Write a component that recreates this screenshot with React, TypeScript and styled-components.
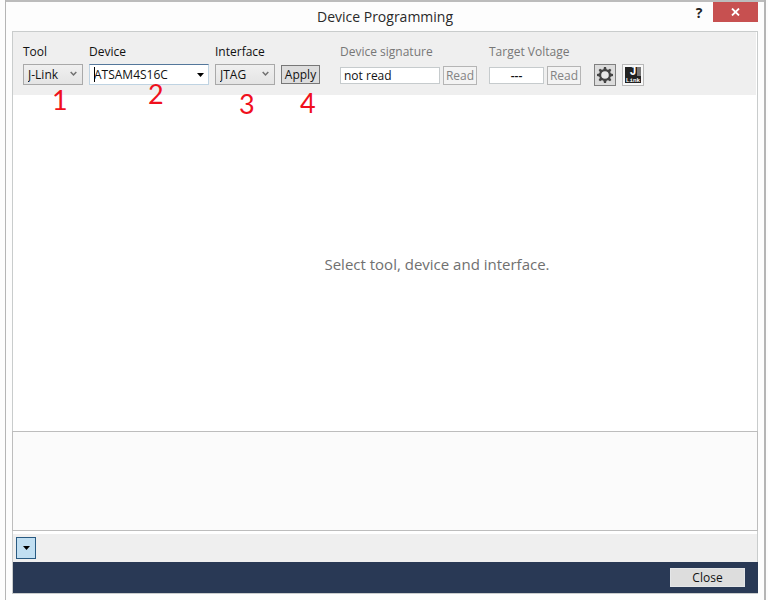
import React from "react";
import styled, { createGlobalStyle, css } from "styled-components";

const GlobalStyle = createGlobalStyle`
  * { box-sizing: border-box; }
  html, body { margin: 0; background: #fdfdfd; overflow: hidden; }
  body, button, input, select { font-family: "Open Sans", "Noto Sans", sans-serif; font-size: 12px; }
`;

const Window = styled.div`
  display: flex;
  flex-direction: column;
  height: 100vh;
  margin: 0 2px 0 5px;
  padding: 0 6px 6px;
  border: solid #b5b5b5;
  border-width: 0 2px 0 1px;
  background: #fdfdfd;
`;

const TitleBar = styled.header`
  display: grid;
  grid-template-columns: 1fr auto 1fr;
  height: 31px;
  flex: none;
  margin: 0 -6px;
  padding: 0 6px;
  border-top: 2px solid #bcbcbc;
`;

const Title = styled.h1`
  grid-column: 2;
  margin: 0;
  padding-top: 2px;
  font-size: 14px;
  line-height: 25px;
  font-weight: 400;
  color: #2a2a2a;
`;

const Caption = styled.div`
  display: flex;
  justify-content: flex-end;
  align-items: flex-start;
`;

const CaptionButton = styled.button<{ $danger?: boolean }>`
  display: flex;
  align-items: center;
  justify-content: center;
  width: ${(p) => (p.$danger ? 45 : 28)}px;
  height: 20px;
  padding: 0;
  border: 0;
  background: ${(p) => (p.$danger ? "#c75050" : "transparent")};
  color: ${(p) => (p.$danger ? "#fff" : "#222")};
  font-size: 14px;
  font-weight: 700;
`;

const Panel = styled.main`
  display: flex;
  flex-direction: column;
  flex: 1;
  min-height: 0;
  border: 1px solid #c9cccc;
  background: #fff;
`;

const Toolbar = styled.div`
  display: flex;
  align-items: flex-start;
  flex: none;
  height: 63px;
  padding: 10px;
  background: #efefef;
  margin-right: 1px;
`;

const Group = styled.div<{ $gap?: number }>`
  display: flex;
  align-items: flex-end;
  gap: 6px;
  margin-right: ${(p) => p.$gap ?? 0}px;
`;

const Field = styled.div<{ $muted?: boolean }>`
  position: relative;
  display: flex;
  flex-direction: column;
  color: ${(p) => (p.$muted ? "#777" : "#111")};
  label { line-height: 20px; margin-bottom: ${(p) => (p.$muted ? 2 : 1)}px; white-space: nowrap; }
`;

const IconGroup = styled.div`
  display: flex;
  gap: 6px;
  padding-top: 22px;
`;

const Controls = styled.div`
  display: flex;
  align-items: center;
  height: 23px;
  gap: 3px;
`;

const Box = styled.div<{ $width: number }>`
  position: relative;
  width: ${(p) => p.$width}px;
  height: 21px;
`;

const Select = styled.select`
  appearance: none;
  display: block;
  width: 100%;
  height: 21px;
  padding: 0 0 0 4px;
  border: 1px solid #a9a9a9;
  border-radius: 0;
  background: linear-gradient(#f0f0f0, #e4e4e4);
  color: #111;
`;

const Chevron = styled.svg`
  position: absolute;
  right: 6px;
  top: 7px;
  pointer-events: none;
`;

const Combo = styled.div`
  display: flex;
  height: 21px;
  width: 100%;
  border: 1px solid #bfd3e2;
  border-top-color: #54779b;
  background: #fff;
`;

const ComboInput = styled.input`
  flex: 1;
  min-width: 0;
  padding: 0 0 0 4px;
  border: 0;
  background: transparent;
  color: #111;
  outline: none;
`;

const ComboButton = styled.button`
  display: flex;
  align-items: center;
  justify-content: center;
  width: 15px;
  padding: 0;
  border: 0;
  background: transparent;
`;

const Caret = styled.span`
  position: absolute;
  left: 5px;
  top: 3px;
  width: 1px;
  height: 15px;
  background: #000;
`;

const TextBox = styled.input<{ $width: number; $center?: boolean }>`
  width: ${(p) => p.$width}px;
  height: 17px;
  padding: 0 3px;
  border: 1px solid #c6cbcd;
  background: #fff;
  color: #111;
  ${(p) => p.$center && css`
    text-align: center;
    font-weight: 600;
  `}
`;

const Button = styled.button<{ $kind: "apply" | "read" | "close" }>`
  padding: 0;
  border: 1px solid #b5b5b5;
  border-radius: 0;
  line-height: 16px;
  height: 19px;
  width: 34px;
  color: #838383;
  background: #f3f3f3;
  ${(p) => p.$kind === "apply" && css`
    width: 39px;
    border-color: #777;
    background: #ddd;
    color: #111;
  `}
  ${(p) => p.$kind === "close" && css`
    width: 75px;
    border-color: #e4e6e8;
    background: #ddd;
    color: #111;
  `}
`;

const IconButton = styled.button<{ $active?: boolean }>`
  display: flex;
  align-items: center;
  justify-content: center;
  width: 22px;
  height: 22px;
  padding: 0;
  border: 1px solid ${(p) => (p.$active ? "#808080" : "#b9b9b9")};
  background: ${(p) => (p.$active ? "#dcdcdc" : "#f8f8f8")};
`;

const LogoText = styled.text<{ $size: number }>`
  font: 700 ${(p) => p.$size}px "Liberation Mono", monospace;
  fill: #fff;
  text-anchor: middle;
`;

const Step = styled.span<{ $left: number; $top: number }>`
  position: absolute;
  left: ${(p) => p.$left}px;
  top: ${(p) => p.$top}px;
  font: 27px/28px Lato, sans-serif;
  color: #f0101c;
  pointer-events: none;
`;

const Stage = styled.section`
  display: flex;
  align-items: center;
  justify-content: center;
  flex: 1;
  padding: 2px 0 0 104px;
  font-size: 15px;
  color: #707070;
`;

const Output = styled.section`
  flex: none;
  height: 100px;
  border: 1px solid #bdbdbd;
  margin-left: -1px;
  margin-right: -1px;
  background: #fbfbfb;
`;

const StatusBar = styled.div`
  display: flex;
  align-items: center;
  flex: none;
  height: 28px;
  margin-top: 3px;
  padding: 0 3px;
  background: #efefef;
`;

const ToggleButton = styled.button`
  display: flex;
  align-items: center;
  justify-content: center;
  width: 20px;
  height: 22px;
  padding: 0;
  border: 1px solid #285a82;
  background: #c1dff2;
`;

const Footer = styled.footer`
  display: flex;
  align-items: center;
  justify-content: flex-end;
  flex: none;
  height: 31px;
  margin-right: -1px;
  padding: 0 13px;
  background: #293955;
`;

const Triangle = () => (
  <svg width="7" height="4" viewBox="0 0 7 4" aria-hidden="true">
    <path d="M0 0h7L3.5 4z" fill="#000" />
  </svg>
);

const Down = () => (
  <Chevron width="7" height="6" viewBox="0 0 7 6" aria-hidden="true">
    <path d="M.7 1l2.8 3L6.3 1" fill="none" stroke="#707070" strokeWidth="1.5" />
  </Chevron>
);

const Gear = () => (
  <svg width="18" height="18" viewBox="-9 -9 18 18" aria-hidden="true">
    {[0, 45, 90, 135, 180, 225, 270, 315].map((a) => (
      <path key={a} d="M-1.7-5L-1-8H1L1.7-5z" fill="#444" transform={`rotate(${a})`} />
    ))}
    <circle r="4.9" fill="#e8e8e8" stroke="#444" strokeWidth="2.2" />
  </svg>
);

const JLink = () => (
  <svg width="16" height="16" viewBox="0 0 16 16" aria-hidden="true">
    <path d="M0 0h16v16H0z" fill="#222" />
    <path d="M12 0h4v9h-4z" fill="#777" />
    <LogoText $size={12} x="8" y="8">J</LogoText>
    <LogoText $size={6} x="8" y="15">Link</LogoText>
  </svg>
);

export default function App() {
  return (
    <>
      <GlobalStyle />
      <Window>
        <TitleBar>
          <Title>Device Programming</Title>
          <Caption>
            <CaptionButton aria-label="Help">?</CaptionButton>
            <CaptionButton $danger aria-label="Close window">
              <svg width="9" height="8" viewBox="0 0 9 8" aria-hidden="true">
                <path d="M1 .5l7 7M8 .5l-7 7" stroke="#fff" strokeWidth="1.8" />
              </svg>
            </CaptionButton>
          </Caption>
        </TitleBar>
        <Panel>
          <Toolbar>
            <Group $gap={20}>
              <Field>
                <label htmlFor="tool">Tool</label>
                <Controls>
                  <Box $width={60}>
                    <Select id="tool"><option>J-Link</option></Select>
                    <Down />
                  </Box>
                </Controls>
                <Step $left={29} $top={44}>1</Step>
              </Field>
              <Field>
                <label htmlFor="device">Device</label>
                <Controls>
                  <Box $width={120}>
                    <Combo>
                      <ComboInput id="device" defaultValue="ATSAM4S16C" />
                      <ComboButton aria-label="Show devices"><Triangle /></ComboButton>
                    </Combo>
                    <Caret />
                  </Box>
                </Controls>
                <Step $left={59} $top={38}>2</Step>
              </Field>
              <Field>
                <label htmlFor="interface">Interface</label>
                <Controls>
                  <Box $width={60}>
                    <Select id="interface"><option>JTAG</option></Select>
                    <Down />
                  </Box>
                </Controls>
                <Step $left={24} $top={48}>3</Step>
              </Field>
              <Field>
                <Controls><Button $kind="apply">Apply</Button></Controls>
                <Step $left={19} $top={26}>4</Step>
              </Field>
            </Group>
            <Group $gap={12}>
              <Field $muted>
                <label htmlFor="signature">Device signature</label>
                <Controls>
                  <TextBox id="signature" $width={100} readOnly value="not read" />
                  <Button $kind="read" disabled>Read</Button>
                </Controls>
              </Field>
            </Group>
            <Group $gap={13}>
              <Field $muted>
                <label htmlFor="voltage">Target Voltage</label>
                <Controls>
                  <TextBox id="voltage" $width={55} $center readOnly value="---" />
                  <Button $kind="read" disabled>Read</Button>
                </Controls>
              </Field>
            </Group>
            <IconGroup>
              <IconButton $active aria-label="Settings"><Gear /></IconButton>
              <IconButton aria-label="J-Link information"><JLink /></IconButton>
            </IconGroup>
          </Toolbar>
          <Stage>Select tool, device and interface.</Stage>
          <Output aria-label="Output" />
          <StatusBar>
            <ToggleButton aria-label="Toggle output"><Triangle /></ToggleButton>
          </StatusBar>
          <Footer><Button $kind="close">Close</Button></Footer>
        </Panel>
      </Window>
    </>
  );
}
